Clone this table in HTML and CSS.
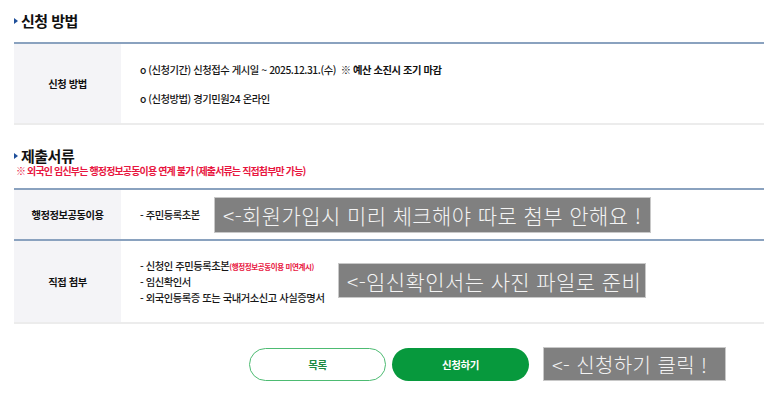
FILE: index.html
```html
<!DOCTYPE html>
<html lang="ko">
<head>
<meta charset="utf-8">
<link rel="stylesheet" href="styles.css">
</head>
<body>
<div class="page">
  <h2 class="sec-title"><span class="tri"></span>신청 방법</h2>
  <div class="tbl">
    <div class="row row-a">
      <div class="th">신청 방법</div>
      <div class="td td-spaced">
        <p>o (신청기간) 신청접수 게시일 ~ 2025.12.31.(수) &nbsp;<b>※ 예산 소진시 조기 마감</b></p>
        <p>o (신청방법) 경기민원24 온라인</p>
      </div>
    </div>
  </div>

  <h2 class="sec-title sec-two"><span class="tri"></span>제출서류</h2>
  <p class="warn">※ 외국인 임신부는 행정정보공동이용 연계 불가 (제출서류는 직접첨부만 가능)</p>
  <div class="tbl tbl-two">
    <div class="row row-b">
      <div class="th">행정정보공동이용</div>
      <div class="td">
        <p>- 주민등록초본</p>
      </div>
    </div>
    <div class="row row-c">
      <div class="th">직접 첨부</div>
      <div class="td td-list">
        <p>- 신청인 주민등록초본<span class="red-sm">(행정정보공동이용 미연계시)</span></p>
        <p>- 임신확인서</p>
        <p>- 외국인등록증 또는 국내거소신고 사실증명서</p>
      </div>
    </div>
  </div>

  <div class="btns">
    <a class="btn btn-line">목록</a>
    <a class="btn btn-fill">신청하기</a>
  </div>

  <div class="note note-1">&lt;-회원가입시 미리 체크해야 따로 첨부 안해요 !</div>
  <div class="note note-2">&lt;-임신확인서는 사진 파일로 준비</div>
  <div class="note note-3">&lt;- 신청하기 클릭 !</div>
</div>
</body>
</html>
```

FILE: styles.css
```css
* { box-sizing: border-box; }
html, body { margin: 0; padding: 0; background: #fff; }
body {
  font-family: "Noto Sans CJK KR", "Noto Sans", sans-serif;
  color: #222;
  width: 773px;
  height: 412px;
  overflow: hidden;
}
.page {
  position: relative;
  padding: 11px 9px 0 14px;
}
p { margin: 0; }
.sec-title {
  margin: 0;
  display: flex;
  align-items: center;
  gap: 3px;
  font-size: 15px;
  line-height: 20px;
  font-weight: 700;
  color: #111;
  letter-spacing: -0.5px;
}
.tri {
  width: 0;
  height: 0;
  border-top: 3.5px solid transparent;
  border-bottom: 3.5px solid transparent;
  border-left: 4px solid #1f4f9a;
}
.sec-two {
  margin-top: 23px;
  line-height: 16px;
}
.warn {
  margin-top: 1px;
  font-size: 10px;
  line-height: 12px;
  font-weight: 700;
  color: #e8163f;
  padding-left: 2px;
  letter-spacing: -0.85px;
}
.tbl {
  margin-top: 11px;
  border-top: 2px solid #8aa2bf;
}
.row {
  display: flex;
  font-size: 10.3px;
  letter-spacing: -0.45px;
}
.th {
  width: 107px;
  flex: none;
  background: #f4f4f7;
  display: flex;
  align-items: center;
  justify-content: center;
  font-weight: 700;
  color: #111;
}
.td {
  flex: 1;
  display: flex;
  flex-direction: column;
  justify-content: center;
  padding-left: 19px;
  color: #161616;
  font-weight: 500;
}
.td b { font-weight: 700; color: #111; }
.row-a {
  height: 81px;
  border-bottom: 2px solid #ececec;
}
.td-spaced { gap: 14px; padding-top: 1px; }
.tbl-two { margin-top: 11px; }
.row-b {
  height: 51px;
  border-bottom: 2px solid #8aa2bf;
}
.row-c {
  height: 83px;
  border-bottom: 2px solid #ececec;
}
.td-list p { line-height: 15.5px; }
.red-sm {
  font-size: 7.5px;
  color: #e8163f;
  font-weight: 700;
  letter-spacing: -0.4px;
}
.btns {
  margin-top: 24px;
  display: flex;
  justify-content: center;
  gap: 6px;
}
.btn {
  width: 137px;
  height: 33px;
  border-radius: 17px;
  display: flex;
  align-items: center;
  justify-content: center;
  font-size: 10.5px;
  font-weight: 700;
  letter-spacing: -0.4px;
}
.btn-line {
  border: 1.5px solid #4dbb72;
  color: #1e8a43;
  background: #fff;
}
.btn-fill {
  background: #07993d;
  color: #fff;
}
.note {
  position: absolute;
  background: #808080;
  border: 1px solid #c8c8c8;
  color: #f4f4f4;
  font-family: "Noto Sans CJK KR", sans-serif;
  font-weight: 300;
  font-size: 21px;
  display: flex;
  align-items: center;
  padding-left: 8px;
  white-space: nowrap;
}
.note-1 { left: 214px; top: 197px; width: 437px; height: 36px; letter-spacing: 0.4px; }
.note-2 { left: 338px; top: 263px; width: 308px; height: 35px; letter-spacing: 0.4px; }
.note-3 { left: 543px; top: 347px; width: 183px; height: 34px; letter-spacing: 0.4px; font-size: 20px; }
```
